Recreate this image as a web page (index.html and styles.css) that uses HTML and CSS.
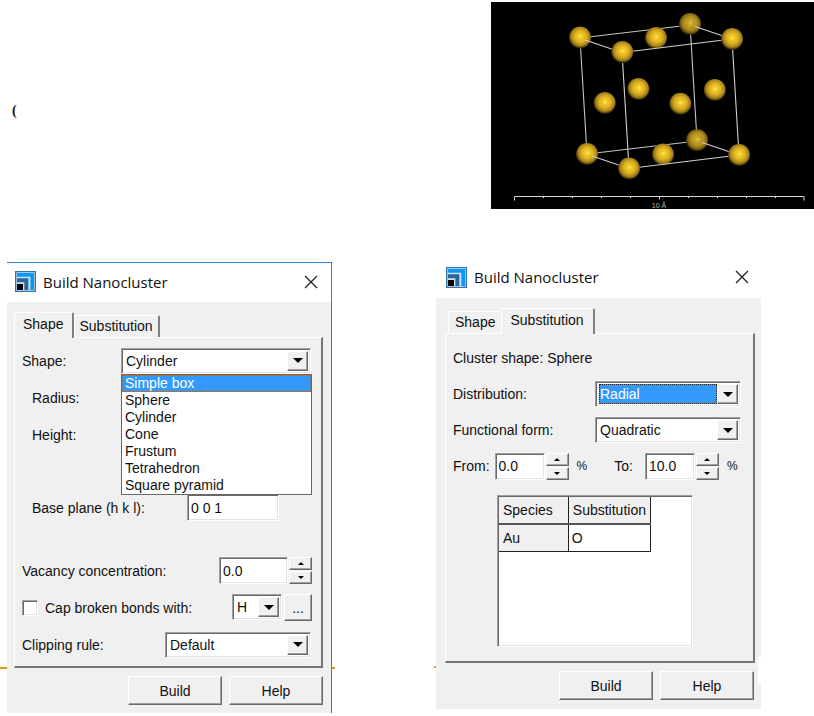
FILE: index.html
```html
<!DOCTYPE html>
<html lang="en">
<head>
<meta charset="utf-8">
<title>Build Nanocluster</title>
<link rel="stylesheet" href="styles.css">
</head>
<body>
<header class="top">
  <span class="mark">(</span>
  <svg class="crystal" viewBox="490 2 324 208" role="img" aria-label="Gold unit cell">
    <defs>
      <radialGradient id="gold" cx="0.52" cy="0.45" r="0.55">
        <stop offset="0" stop-color="#fff04a"/>
        <stop offset="0.18" stop-color="#f2cb2a"/>
        <stop offset="0.5" stop-color="#dbae22"/>
        <stop offset="0.78" stop-color="#a17e18"/>
        <stop offset="1" stop-color="#1c1604"/>
      </radialGradient>
      <radialGradient id="far" cx="0.52" cy="0.45" r="0.55">
        <stop offset="0" stop-color="#e0d040"/>
        <stop offset="0.18" stop-color="#c9a726"/>
        <stop offset="0.55" stop-color="#b08d1e"/>
        <stop offset="0.8" stop-color="#7c6212"/>
        <stop offset="1" stop-color="#181303"/>
      </radialGradient>
    </defs>
    <rect x="491" y="2" width="323" height="207" fill="#000"/>
    <g stroke="#c4c4c4" stroke-width="1.1" fill="none">
      <path d="M580 38 690 25M690 24 697 140M587 154 697 141M580 38 587 154"/>
    </g>
    <g fill="url(#far)">
      <circle cx="690" cy="24" r="11"/><circle cx="697" cy="140.300" r="11"/>
    </g>
    <g fill="url(#gold)">
      <circle cx="656" cy="38" r="11"/><circle cx="663" cy="154.500" r="11"/>
      <circle cx="638.300" cy="89" r="11"/><circle cx="714.700" cy="90" r="11"/>
      <circle cx="604.700" cy="103" r="11"/><circle cx="680.300" cy="103.700" r="11"/>
      <circle cx="580" cy="37.500" r="11"/><circle cx="587" cy="154" r="11"/>
    </g>
    <g stroke="#cfcfcf" stroke-width="1.100" fill="none">
      <path d="M585 40 622 52.500M622 52.500 732 39M695 26.500 732 39M732 39 739 155M622 52 629 168M592 156 629 168.500M629 168.500 739 155M702 142.500 739 155"/>
    </g>
    <g fill="url(#gold)">
      <circle cx="732" cy="39" r="11"/><circle cx="739" cy="155" r="11"/>
      <circle cx="622.300" cy="52" r="11"/><circle cx="629" cy="168.500" r="11"/>
    </g>
    <path d="M514.500 200.500V196.500H804V200.500M543.500 196v2M572.500 196v2M601.500 196v2M630.500 196v2M659.500 196v3.500M688.500 196v2M717.500 196v2M746.500 196v2M775.500 196v2" stroke="#d8d8d8" fill="none"/>
    <text class="scale" x="659" y="208" text-anchor="middle">10 Å</text>
  </svg>
</header>

<main class="windows">
  <div class="slot slot-first">
    <section class="dialog active" aria-label="Build Nanocluster">
      <div class="titlebar">
        <svg class="logo" viewBox="0 0 63 63" aria-hidden="true"><path fill="#c9e3f4" stroke="#3d74a8" stroke-width="4" d="M2 2h59v59H2z"/><path fill="#0a99fb" d="M6 6h51v51H46V17H6z"/><path fill="#2f6596" d="M6 22h34v35H28V34H6z"/><path d="M6 39h18v18H6z"/></svg>
        <h1>Build Nanocluster</h1>
        <button class="close" type="button" aria-label="Close"><svg viewBox="0 0 14 14"><path d="M1 1 13 13M13 1 1 13"/></svg></button>
      </div>
      <form class="body">
        <div class="tabs" role="tablist">
          <button class="tab selected" type="button" role="tab" aria-selected="true">Shape</button>
          <button class="tab" type="button" role="tab" aria-selected="false">Substitution</button>
        </div>
        <div class="panel">
          <div class="row">
            <label for="shape">Shape:</label>
            <span class="combo wide">
              <select id="shape"><option>Cylinder</option></select><i class="arrow"></i>
              <ul class="menu" role="listbox" aria-label="Shape">
                <li class="current" role="option">Simple box</li>
                <li role="option">Sphere</li>
                <li role="option">Cylinder</li>
                <li role="option">Cone</li>
                <li role="option">Frustum</li>
                <li role="option">Tetrahedron</li>
                <li role="option">Square pyramid</li>
              </ul>
            </span>
          </div>
          <div class="row nested"><span>Radius:</span></div>
          <div class="row nested"><span>Height:</span></div>
          <div class="row nested base">
            <label for="plane">Base plane (h k l):</label>
            <input class="field plane" id="plane" type="text" value="0 0 1">
          </div>
          <div class="row vacancy">
            <label for="vacancy">Vacancy concentration:</label>
            <span class="number"><input class="field large" id="vacancy" type="text" value="0.0"><span class="spin"><button type="button" aria-label="Increase"></button><button type="button" aria-label="Decrease"></button></span></span>
          </div>
          <div class="row">
            <input class="check" id="cap" type="checkbox"><label for="cap">Cap broken bonds with:</label>
            <span class="element">
              <span class="combo small"><select aria-label="Element"><option>H</option></select><i class="arrow"></i></span>
              <button class="push more" type="button">...</button>
            </span>
          </div>
          <div class="row">
            <label for="clip">Clipping rule:</label>
            <span class="combo mid"><select id="clip"><option>Default</option></select><i class="arrow"></i></span>
          </div>
        </div>
        <div class="actions"><button class="push" type="button">Build</button><button class="push" type="button">Help</button></div>
      </form>
    </section>
  </div>

  <div class="slot slot-second">
    <section class="dialog" aria-label="Build Nanocluster">
      <div class="titlebar">
        <svg class="logo" viewBox="0 0 63 63" aria-hidden="true"><path fill="#c9e3f4" stroke="#3d74a8" stroke-width="4" d="M2 2h59v59H2z"/><path fill="#0a99fb" d="M6 6h51v51H46V17H6z"/><path fill="#2f6596" d="M6 22h34v35H28V34H6z"/><path d="M6 39h18v18H6z"/></svg>
        <h1>Build Nanocluster</h1>
        <button class="close" type="button" aria-label="Close"><svg viewBox="0 0 14 14"><path d="M1 1 13 13M13 1 1 13"/></svg></button>
      </div>
      <form class="body">
        <div class="tabs" role="tablist">
          <button class="tab" type="button" role="tab" aria-selected="false">Shape</button>
          <button class="tab selected" type="button" role="tab" aria-selected="true">Substitution</button>
        </div>
        <div class="panel">
          <div class="row"><span>Cluster shape: Sphere</span></div>
          <div class="row">
            <label for="dist">Distribution:</label>
            <span class="combo mid focused"><select id="dist"><option>Radial</option></select><i class="arrow"></i></span>
          </div>
          <div class="row">
            <label for="formtype">Functional form:</label>
            <span class="combo mid"><select id="formtype"><option>Quadratic</option></select><i class="arrow"></i></span>
          </div>
          <div class="row range">
            <label for="from">From:</label>
            <span class="number"><input class="field" id="from" type="text" value="0.0"><span class="spin"><button type="button" aria-label="Increase"></button><button type="button" aria-label="Decrease"></button></span></span>
            <span class="unit">%</span>
            <label class="to" for="to">To:</label>
            <span class="number"><input class="field" id="to" type="text" value="10.0"><span class="spin"><button type="button" aria-label="Increase"></button><button type="button" aria-label="Decrease"></button></span></span>
            <span class="unit">%</span>
          </div>
          <div class="list">
            <table>
              <thead><tr><th scope="col">Species</th><th scope="col">Substitution</th></tr></thead>
              <tbody><tr><th scope="row">Au</th><td>O</td></tr></tbody>
            </table>
          </div>
        </div>
        <div class="actions"><button class="push" type="button">Build</button><button class="push" type="button">Help</button></div>
      </form>
    </section>
  </div>
</main>
</body>
</html>
```
FILE: styles.css
```css
* { box-sizing: border-box; }

body {
  margin: 0;
  background: #fff;
  color: #111;
  font: 14px/16px "Liberation Sans", Arial, sans-serif;
}

button, input, select { font: inherit; color: inherit; margin: 0; }

.top {
  display: flex;
  align-items: flex-start;
  padding-top: 2px;
  border: 0;
}
.mark {
  flex: 0 0 490px;
  padding: 100px 0 0 12px;
  font: bold 14px/18px "Liberation Serif", serif;
}
.crystal { flex: 1; min-width: 0; display: block; }
.scale { font: 7px "Liberation Sans", sans-serif; fill: #bbb; }

.windows {
  display: grid;
  grid-template-columns: 1fr 1fr;
  column-gap: 104px;
  align-items: start;
  padding: 48px 53px 4px 7px;
}

.slot { position: relative; z-index: 0; }
.slot-first { margin-top: 4px; }
.slot::before {
  content: "";
  position: absolute;
  z-index: -1;
  bottom: 44px;
  height: 2px;
  background: #d2a01e;
}
.slot-first::before { left: -7px; right: -3px; }
.slot-second::before { left: -2px; right: 2px; bottom: 41px; }
.slot-second::after {
  content: "";
  position: absolute;
  right: 0;
  bottom: 26px;
  width: 3px;
  height: 26px;
  background: #fff;
}

.dialog { background: #f0f0f0; }
.dialog.active { border: solid #2a83d0; border-width: 1px 1px 0 0; }
.titlebar {
  display: flex;
  align-items: center;
  height: 40px;
  padding: 0 12px 2px 10px;
  background: #fff;
}
.dialog.active .titlebar { height: 39px; padding: 0 13px 2px 8px; }
.logo { width: 21px; height: 21px; }
.titlebar h1 {
  flex: 1;
  margin: 0 0 0 7px;
  font: 15px/20px "Open Sans", "Noto Sans", sans-serif;
}
.close { padding: 0; border: 0; background: none; line-height: 0; }
.close svg { width: 14px; height: 14px; fill: none; stroke: #222; stroke-width: 1.3; }

.body { padding: 10px 8px 8px 7px; }
.slot-second .body { padding: 10px 6px 9px 9px; }

.tabs { display: flex; align-items: flex-end; }
.tab {
  height: 22px;
  padding: 0 5px 2px 4px;
  border: solid;
  border-width: 1px 2px 0 1px;
  border-color: #fff #808080 #fff #fff;
  border-radius: 2px 2px 0 0;
  background: #f0f0f0;
}
.tab.selected {
  position: relative;
  z-index: 1;
  height: 26px;
  margin-bottom: -1px;
  padding: 0 9px 4px 8px;
}
.slot-second .tabs { padding-left: 3px; }
.slot-second .tab:first-child { padding: 0 6px 2px; border-right-width: 0; }

.panel {
  padding: 4px 9px 3px 7px;
  border: solid;
  border-width: 1px 2px 2px 1px;
  border-color: #fff #757575 #757575 #fff;
}
.slot-second .panel { padding: 6px 12px 14px 7px; }
.row { display: flex; align-items: center; justify-content: space-between; height: 37px; }
.slot-second .row { height: 36px; }
.nested { padding-left: 10px; }
.base { margin-top: 36px; }
.vacancy { margin-top: 26px; }

.field, .combo, .list, .check {
  border: 1px solid;
  border-color: #a0a0a0 #fff #fff #a0a0a0;
  box-shadow: inset 1px 1px #696969, inset -1px -1px #e3e3e3;
  background: #fff;
}
.field { width: 52px; height: 27px; padding: 1px 3px; border-radius: 0; outline: 0; }
.field.large { width: 69px; }
.field.plane { width: 92px; margin-right: 33px; }

.combo { position: relative; display: flex; height: 26px; padding: 2px; }
.combo select {
  flex: 1;
  min-width: 0;
  padding: 0 20px 0 2px;
  border: 0;
  border-radius: 0;
  background: transparent;
  appearance: none;
  outline: 0;
}
.wide { width: 190px; }
.mid { width: 146px; }
.small { width: 50px; }
.focused select {
  margin: 0 21px 0 1px;
  padding: 0 1px;
  background: #3399ff;
  color: #fff;
  outline: 1px dotted #402000;
  outline-offset: -1px;
}
.slot-first .mid, .wide { margin-right: 1px; }

.arrow {
  position: absolute;
  top: 2px;
  right: 2px;
  bottom: 2px;
  width: 21px;
  display: grid;
  place-items: center;
  pointer-events: none;
}
.arrow::before {
  content: "";
  border: solid transparent;
  border-width: 5px 5px 0;
  border-top-color: #000;
}
.arrow, .push, .spin button {
  border: 1px solid;
  border-color: #fff #696969 #696969 #fff;
  box-shadow: inset -1px -1px #a0a0a0;
  background: #f0f0f0;
  border-radius: 0;
}

.menu {
  position: absolute;
  z-index: 2;
  top: 25px;
  left: -1px;
  right: -2px;
  margin: 0;
  padding: 0;
  border: 1px solid #666;
  background: #fff;
  list-style: none;
  line-height: 17px;
}
.menu li { padding-left: 3px; }
.menu .current { background: #3399ff; color: #fff; outline: 1px dotted #a06a30; outline-offset: -1px; }

.number { display: flex; align-items: center; gap: 1px; }
.spin { display: grid; gap: 1px; }
.spin button { display: grid; place-items: center; width: 23px; height: 13px; padding: 0; }
.spin button::before { content: ""; border: solid transparent; border-width: 0 3px 3px; border-bottom-color: #000; }
.spin button + button::before { border-width: 3px 3px 0; border-top-color: #000; }

.check { appearance: none; width: 16px; height: 16px; margin-right: 7px; }
.element { display: flex; gap: 2px; margin-left: auto; }
.push { width: 94px; height: 29px; padding: 0; }
.push.more { width: 28px; height: 27px; }
.actions { display: flex; justify-content: flex-end; gap: 7px; padding: 8px 1px 0 0; }
.slot-first .actions { padding-right: 0; }

.slot-second .range { justify-content: flex-start; }
.range .number { margin-left: 5px; }
.range .to { margin-left: 27px; }
.range .to + .number { margin-left: 12px; }
.range .field { width: 50px; }
.unit { margin-left: 8px; font-size: 12px; }

.list { width: 196px; height: 152px; margin: 11px 0 0 44px; padding: 1px; }
table { border-collapse: collapse; }
th, td {
  height: 27px;
  padding: 0 4px;
  border: solid #222;
  border-width: 0 1px 1px 0;
  text-align: left;
  font-weight: normal;
}
th { background: #f0f0f0; }
th:first-child { padding-right: 15px; }
thead th { border-bottom: 2px solid #555; }
td { padding-left: 3px; }
```
